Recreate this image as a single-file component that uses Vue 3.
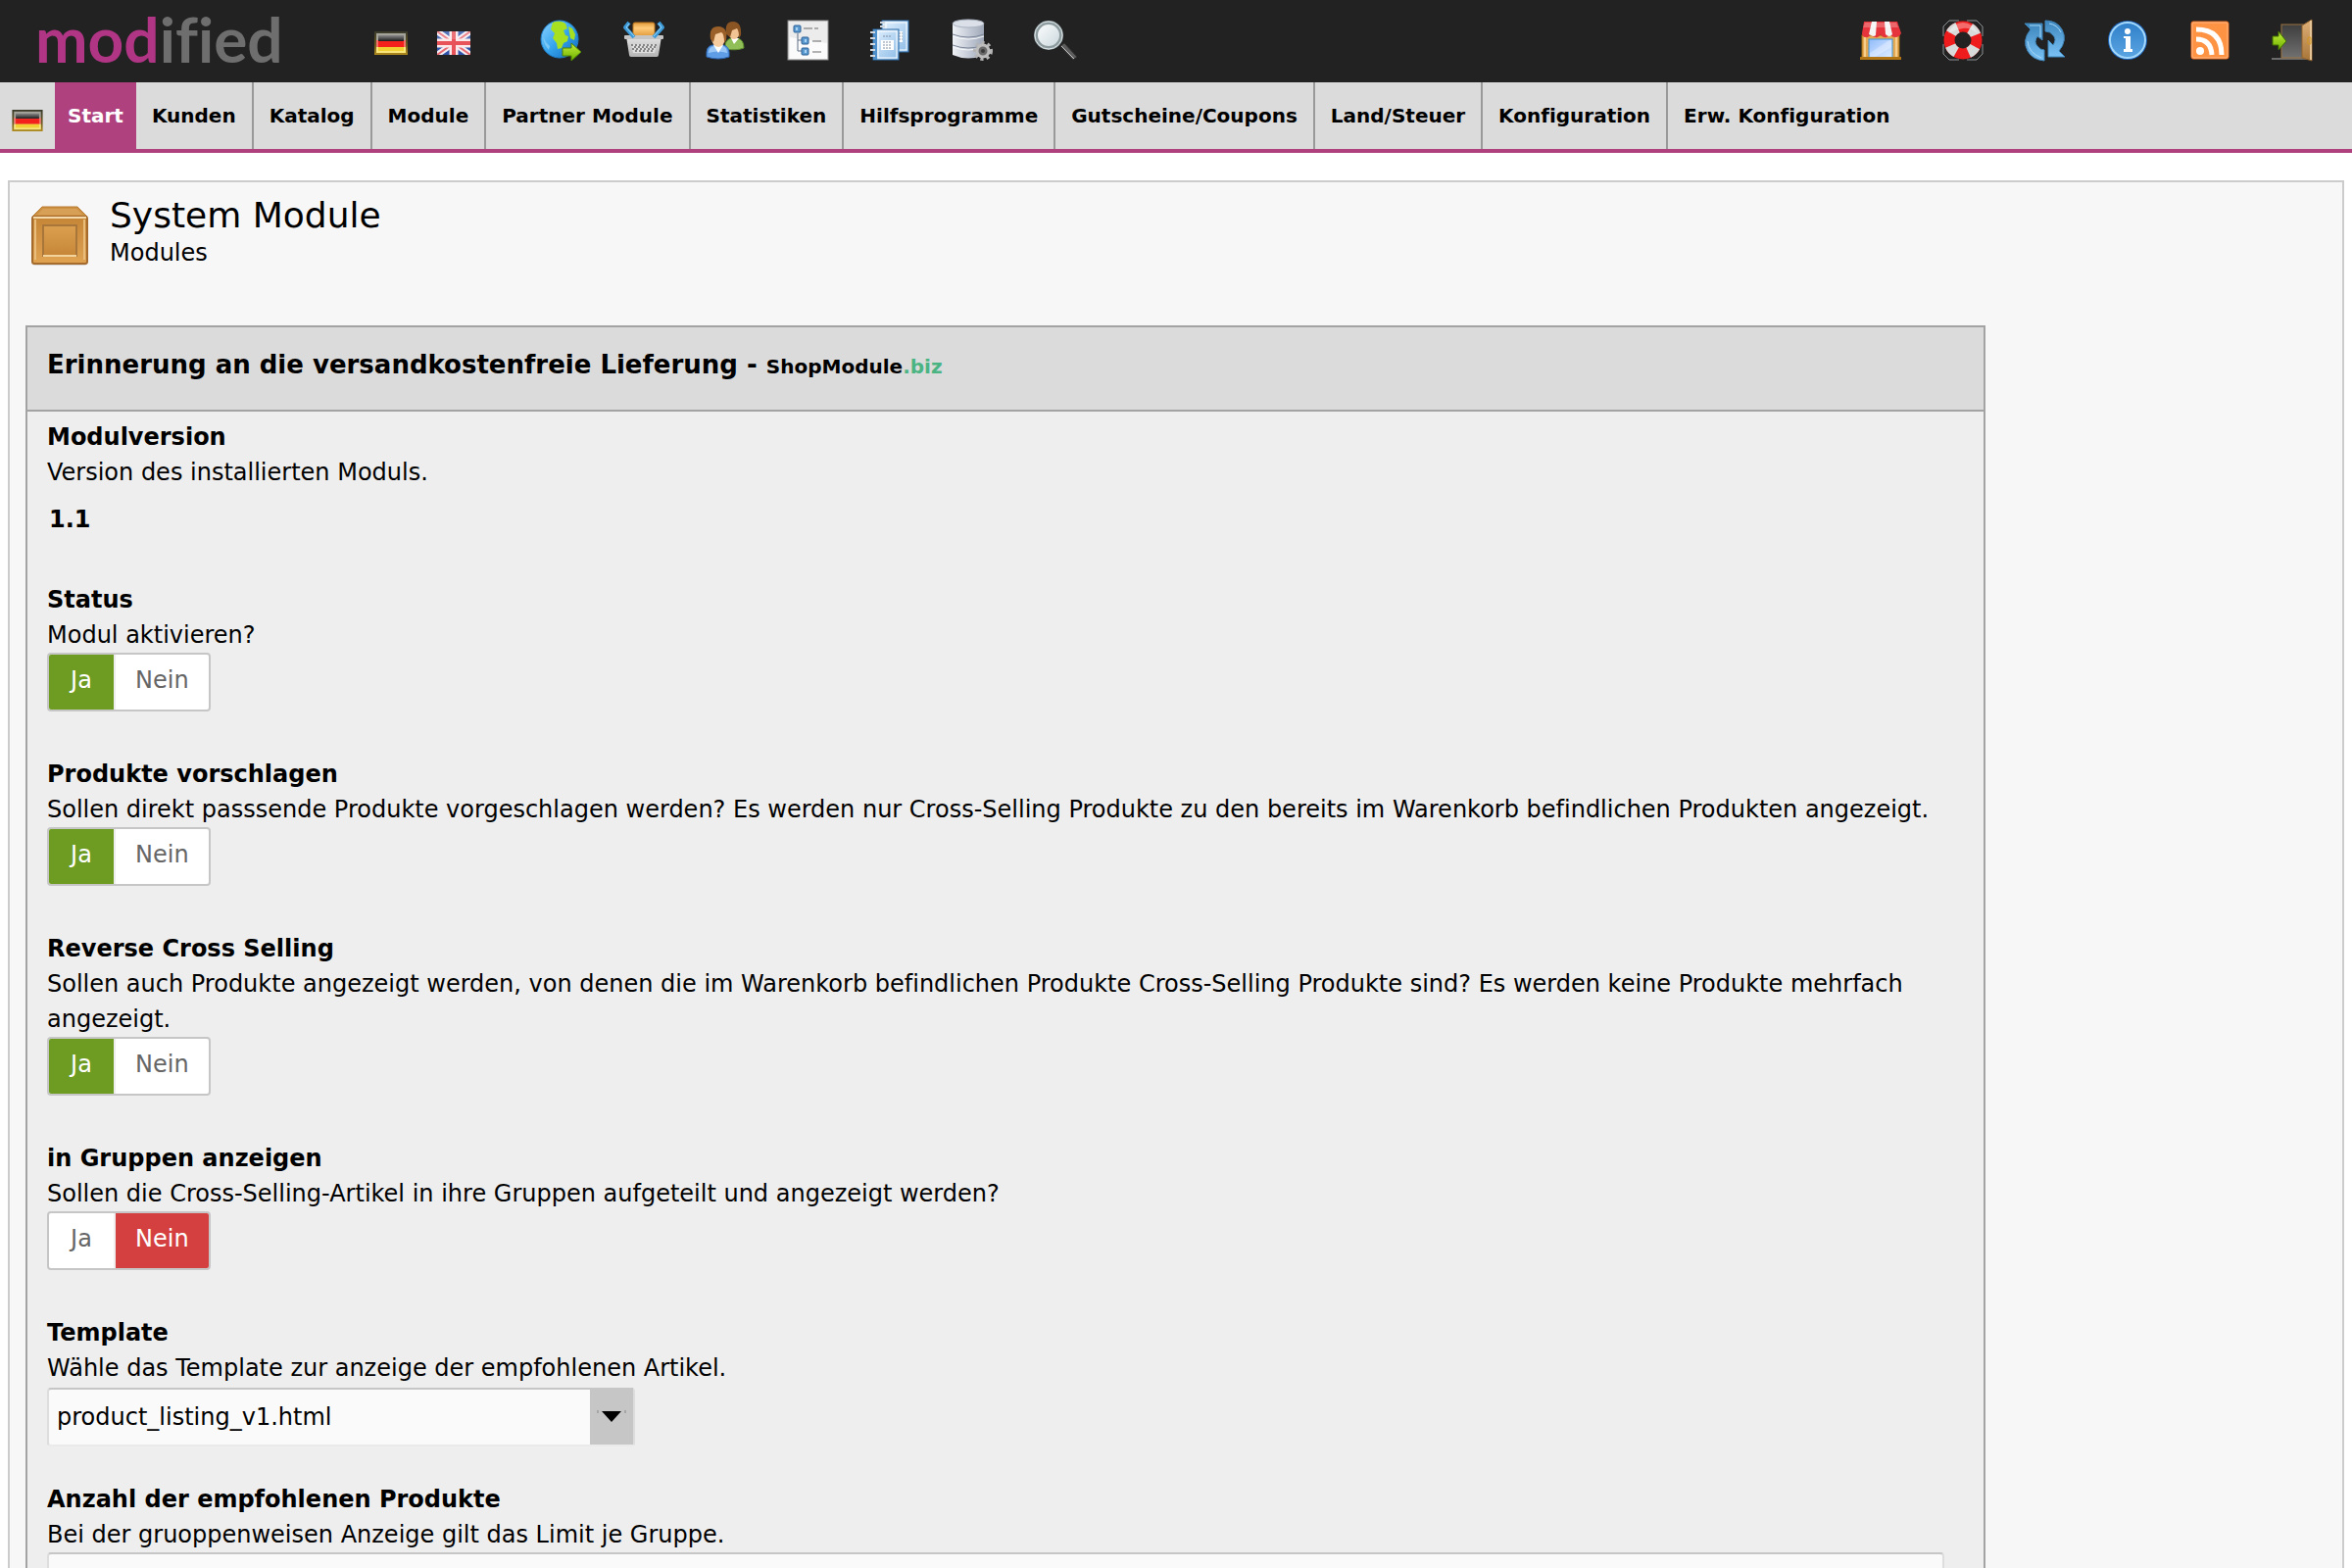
<script setup>
import { ref } from 'vue'

const navItems = [
  'Start',
  'Kunden',
  'Katalog',
  'Module',
  'Partner Module',
  'Statistiken',
  'Hilfsprogramme',
  'Gutscheine/Coupons',
  'Land/Steuer',
  'Konfiguration',
  'Erw. Konfiguration'
]
const activeItem = ref('Start')

const switches = ref([
  {
    key: 'status',
    title: 'Status',
    text: 'Modul aktivieren?',
    value: 'ja'
  },
  {
    key: 'products',
    title: 'Produkte vorschlagen',
    text: 'Sollen direkt passsende Produkte vorgeschlagen werden? Es werden nur Cross-Selling Produkte zu den bereits im Warenkorb befindlichen Produkten angezeigt.',
    value: 'ja'
  },
  {
    key: 'reverse',
    title: 'Reverse Cross Selling',
    text: 'Sollen auch Produkte angezeigt werden, von denen die im Warenkorb befindlichen Produkte Cross-Selling Produkte sind? Es werden keine Produkte mehrfach angezeigt.',
    value: 'ja'
  },
  {
    key: 'groups',
    title: 'in Gruppen anzeigen',
    text: 'Sollen die Cross-Selling-Artikel in ihre Gruppen aufgeteilt und angezeigt werden?',
    value: 'nein'
  }
])

const template = ref('product_listing_v1.html')
const limit = ref('')
</script>

<template>
  <div class="admin">
    <!-- Shared gradients and symbols -->
    <svg class="defs" aria-hidden="true">
      <defs>
        <linearGradient id="g-globe" x1="0" y1="0" x2="1" y2="1">
          <stop offset="0" stop-color="#8fd4ff" />
          <stop offset="0.5" stop-color="#36a5ee" />
          <stop offset="1" stop-color="#0f66b8" />
        </linearGradient>
        <linearGradient id="g-green" x1="0" y1="0" x2="0" y2="1">
          <stop offset="0" stop-color="#c4ee3a" />
          <stop offset="1" stop-color="#6cb000" />
        </linearGradient>
        <linearGradient id="g-orange" x1="0" y1="0" x2="0" y2="1">
          <stop offset="0" stop-color="#e09a3a" />
          <stop offset="0.4" stop-color="#ffcb7a" />
          <stop offset="1" stop-color="#e09a3a" />
        </linearGradient>
        <linearGradient id="g-silver" x1="0" y1="0" x2="0" y2="1">
          <stop offset="0" stop-color="#e4e4e4" />
          <stop offset="1" stop-color="#b4b4b4" />
        </linearGradient>
        <linearGradient id="g-disk" x1="0" y1="0" x2="1" y2="0">
          <stop offset="0" stop-color="#eef1f5" />
          <stop offset="0.5" stop-color="#c6ccd8" />
          <stop offset="1" stop-color="#9fa8b8" />
        </linearGradient>
        <linearGradient id="g-book" x1="0" y1="0" x2="1" y2="1">
          <stop offset="0" stop-color="#e4f2ff" />
          <stop offset="1" stop-color="#8cbbe6" />
        </linearGradient>
        <linearGradient id="g-blue" x1="0" y1="0" x2="0" y2="1">
          <stop offset="0" stop-color="#3d86bd" />
          <stop offset="1" stop-color="#7ac2f5" />
        </linearGradient>
        <linearGradient id="g-info" x1="0" y1="0" x2="0" y2="1">
          <stop offset="0" stop-color="#2f7fc9" />
          <stop offset="1" stop-color="#5ba5e2" />
        </linearGradient>
        <linearGradient id="g-glass" x1="0" y1="0" x2="1" y2="1">
          <stop offset="0" stop-color="#ffffff" />
          <stop offset="1" stop-color="#c8d6dc" />
        </linearGradient>
        <linearGradient id="g-window" x1="0" y1="0" x2="1" y2="1">
          <stop offset="0" stop-color="#8fbcf8" />
          <stop offset="0.5" stop-color="#bcd6ff" />
          <stop offset="1" stop-color="#dfeeff" />
        </linearGradient>
        <linearGradient id="g-wood" x1="0" y1="0" x2="0" y2="1">
          <stop offset="0" stop-color="#c58536" />
          <stop offset="1" stop-color="#dfa352" />
        </linearGradient>
        <linearGradient id="g-wood-in" x1="0" y1="0" x2="0" y2="1">
          <stop offset="0" stop-color="#dba04f" />
          <stop offset="1" stop-color="#c68638" />
        </linearGradient>
        <linearGradient id="g-door" x1="0" y1="0" x2="0" y2="1">
          <stop offset="0" stop-color="#3e3e3e" />
          <stop offset="1" stop-color="#707070" />
        </linearGradient>
        <linearGradient id="g-leaf" x1="0" y1="0" x2="0" y2="1">
          <stop offset="0" stop-color="#deb078" />
          <stop offset="1" stop-color="#a87538" />
        </linearGradient>
        <linearGradient id="g-flag-black" x1="0" y1="0" x2="0" y2="1">
          <stop offset="0" stop-color="#8a8a8a" />
          <stop offset="1" stop-color="#1c1c1c" />
        </linearGradient>
        <linearGradient id="g-flag-edge" x1="0" y1="0" x2="0" y2="1">
          <stop offset="0" stop-color="#3a3a2c" />
          <stop offset="0.6" stop-color="#6b5a20" />
          <stop offset="1" stop-color="#b08a1c" />
        </linearGradient>
        <symbol id="flag-de" viewBox="0 0 34 24">
          <rect width="34" height="24" fill="url(#g-flag-edge)" />
          <rect x="2" y="2" width="30" height="20" fill="#a3a39a" />
          <rect x="2" y="9" width="30" height="7" fill="#f47068" />
          <rect x="2" y="16" width="30" height="6" fill="#f8e57c" />
          <rect x="4" y="4" width="26" height="6" fill="url(#g-flag-black)" />
          <rect x="4" y="10" width="26" height="6" fill="#f3201c" />
          <rect x="4" y="16" width="26" height="4" fill="#f0d033" />
        </symbol>
        <symbol id="flag-gb" viewBox="0 0 34 24">
          <rect width="34" height="24" fill="#2f53a8" />
          <path d="M0 0L34 24M34 0L0 24" stroke="#f3eef4" stroke-width="6" />
          <path d="M0 0L34 24M34 0L0 24" stroke="#ea6a72" stroke-width="2" />
          <path d="M17 0V24M0 12H34" stroke="#fbe9ea" stroke-width="9" />
          <path d="M17 0V24M0 12H34" stroke="#e8535a" stroke-width="4" />
          <rect width="34" height="8" fill="#ffffff" opacity="0.18" />
        </symbol>
      </defs>
    </svg>

    <header class="topbar">
      <a href="#" class="logo"><span class="logo-mod">mod</span>ified</a>

      <div class="languages">
        <a href="#" aria-label="Deutsch"><svg class="flag"><use href="#flag-de" /></svg></a>
        <a href="#" aria-label="English"><svg class="flag"><use href="#flag-gb" /></svg></a>
      </div>

      <div class="tools">
        <!-- Globe -->
        <a href="#" aria-label="Shop">
          <svg viewBox="0 0 42 42" class="icon">
            <circle cx="19" cy="20" r="19" fill="url(#g-globe)" stroke="#1f7fcb" />
            <path d="M12 3q7-3 13 1l2 5-4 2 2 5 3 1-1 5-4 2-2 5-4 1-1-6-4-5 2-5-4-4zM28 7l4 2 3 6-1 6-4-2-1-6z" fill="#a6e021" />
            <path d="M2 17l3 6 4 4-1 4Q3 26 2 17z" fill="#7cc8f5" />
            <path d="M22 29h9v-5l10 9-10 9v-5h-9z" fill="url(#g-green)" stroke="#4c8200" />
          </svg>
        </a>
        <!-- Basket -->
        <a href="#" aria-label="Bestellungen">
          <svg viewBox="0 0 42 42" class="icon">
            <rect x="10" y="3" width="22" height="14" rx="2" fill="url(#g-orange)" stroke="#b9741c" />
            <path d="M3 17h36l-3 19q0 2-2 2H8q-2 0-2-2z" fill="url(#g-silver)" />
            <rect x="1" y="16" width="40" height="4" rx="1" fill="#c4c4c4" />
            <path d="M8 25h26l-2 9H10z" fill="#dedede" />
            <path d="M8 26h26M9 30h24" stroke="#858585" stroke-width="2" stroke-dasharray="2 2" />
            <path d="M9 28h24M10 32h22" stroke="#858585" stroke-width="2" stroke-dasharray="2 2" stroke-dashoffset="2" />
            <path d="M6 3L2 8l9 10M36 3l4 5-9 10" fill="none" stroke="#3c9ad8" stroke-width="4" stroke-linejoin="round" />
            <path d="M6 4L3 8l8 9M36 4l3 4-8 9" fill="none" stroke="#9bd5f8" />
          </svg>
        </a>
        <!-- Customers -->
        <a href="#" aria-label="Kunden">
          <svg viewBox="0 0 42 42" class="icon">
            <path d="M20 30q-1-9 6-11h6q7 1 7 10-7 3-19 1z" fill="#8fbf56" stroke="#5f8f30" />
            <path d="M26 19l3 6 5-6z" fill="#ffffff" />
            <ellipse cx="29" cy="12" rx="6" ry="8" fill="#f3c493" />
            <path d="M21 15Q19 2 28 2t8 14l-2 3q0-8-2-10l-5 2-2 7z" fill="#8b5423" />
            <path d="M1 38q-1-11 6-12h11q7 1 6 12-11 4-23 0z" fill="#5f9ee6" stroke="#2d66b5" />
            <path d="M3 34q0-6 6-7h8q5 1 5 7-9-3-19 0z" fill="#9ac6f6" />
            <path d="M8 26l5 8 5-8z" fill="#ffffff" />
            <ellipse cx="13" cy="19" rx="7" ry="9" fill="#f7cd9f" />
            <path d="M5 20Q3 7 13 7t8 14l-2 3q0-10-3-11l-6 2-2 8z" fill="#9b6029" />
          </svg>
        </a>
        <!-- Tree -->
        <a href="#" aria-label="Kategorien">
          <svg viewBox="0 0 42 42" class="icon">
            <rect x="0" y="1" width="41" height="40" fill="#ececec" stroke="#8c8c8c" />
            <path d="M2 18l38 6v16H2z" fill="#ffffff" opacity="0.8" />
            <path d="M10 14v18h6M10 21h6" fill="none" stroke="#5d6f83" />
            <g fill="#5c9bd0" stroke="#2b5f94">
              <rect x="6" y="6" width="7" height="7" rx="1" />
              <rect x="14" y="18" width="7" height="7" rx="1" />
              <rect x="14" y="29" width="7" height="7" rx="1" />
            </g>
            <path d="M9 8v3M18 20v3M18 31v3" stroke="#a9d3f5" stroke-width="2" />
            <path d="M16 9h9M27 9h4M25 22h9M25 33h9" stroke="#6b6b6b" stroke-width="1" />
          </svg>
        </a>
        <!-- Notebooks -->
        <a href="#" aria-label="Content">
          <svg viewBox="0 0 42 42" class="icon">
            <rect x="12" y="1" width="27" height="32" fill="url(#g-book)" stroke="#2f6ca8" />
            <rect x="16" y="3" width="21" height="28" fill="none" stroke="#ffffff" />
            <rect x="28" y="12" width="5" height="11" fill="#ffffff" />
            <path d="M29 14h4M29 17h4M29 20h4" stroke="#8a9bb0" stroke-dasharray="2 1" />
            <rect x="3" y="10" width="26" height="31" fill="url(#g-book)" stroke="#2f6ca8" />
            <rect x="3" y="10" width="4" height="31" fill="#4d8fca" />
            <rect x="8" y="12" width="19" height="27" fill="none" stroke="#ffffff" />
            <rect x="11" y="21" width="13" height="10" fill="#ffffff" />
            <path d="M13 23h9M13 26h9M13 29h9M13 17h9" stroke="#7f8fa3" stroke-dasharray="2 1" />
            <path d="M0 13h5M0 19h5M0 25h5M0 31h5M0 37h5" stroke="#d2d8de" stroke-width="2" />
            <path d="M10 3h5M10 7h5" stroke="#d2d8de" stroke-width="2" />
          </svg>
        </a>
        <!-- Database -->
        <a href="#" aria-label="Datenbank">
          <svg viewBox="0 0 42 42" class="icon">
            <path d="M0 4v32q16 7 32 0V4z" fill="url(#g-disk)" />
            <ellipse cx="16" cy="4" rx="16" ry="4" fill="#dbe0e8" stroke="#aab2c0" />
            <path d="M0 15q16 6 32 0M0 26q16 6 32 0" fill="none" stroke="#7d8798" />
            <path d="M0 17q16 6 32 0M0 28q16 6 32 0" fill="none" stroke="#f5f7fa" />
            <circle cx="31" cy="32" r="8" fill="none" stroke="#b4b4b4" stroke-width="4" stroke-dasharray="3 3" />
            <circle cx="31" cy="32" r="6" fill="#6a6a6a" stroke="#bdbdbd" stroke-width="3" />
            <circle cx="31" cy="32" r="2" fill="#3a3a3a" />
          </svg>
        </a>
        <!-- Search -->
        <a href="#" aria-label="Suche">
          <svg viewBox="0 0 42 42" class="icon">
            <path d="M26 27l4-3 13 14-4 3z" fill="#5d5d5d" stroke="#2f2f2f" />
            <path d="M27 27l13 13" stroke="#c4c4c4" stroke-width="1" />
            <circle cx="14" cy="16" r="13" fill="url(#g-glass)" stroke="#8d9b9f" stroke-width="4" />
            <circle cx="14" cy="16" r="14" fill="none" stroke="#dfe8ea" stroke-width="1" />
          </svg>
        </a>
      </div>

      <div class="tools tools-right">
        <!-- Storefront -->
        <a href="#" aria-label="Shop ansehen">
          <svg viewBox="0 0 42 42" class="icon">
            <rect x="2" y="16" width="38" height="23" fill="#e3a851" stroke="#9d6a14" />
            <path d="M5 18v20M37 18v20" stroke="#f6cf8c" stroke-width="2" />
            <rect x="9" y="20" width="24" height="20" fill="url(#g-window)" stroke="#3f97d8" stroke-width="1" />
            <path d="M10 34L30 21h2v7L14 39h-4z" fill="#ffffff" opacity="0.3" />
            <rect y="38" width="42" height="3" fill="#b17516" />
            <path d="M4 2h34l4 12q-2 4-6 4t-5-3q-3 4-6 3-3 0-4-3-2 4-5 3-4 0-5-3-2 4-5 3-4 0-4-4z" fill="#e5343b" />
            <path d="M12 2h5l-1 14q-2 2-5 0l-2-1zM25 2h5l3 13q-3 4-7 0z" fill="#f4f4f4" />
            <path d="M5 3h32l2 5H3z" fill="#ffffff" opacity="0.25" />
          </svg>
        </a>
        <!-- Life buoy -->
        <a href="#" aria-label="Hilfe">
          <svg viewBox="0 0 42 42" class="icon">
            <path d="M17 1H7L1 7v10M25 1h10l6 6v10M1 25v10l6 6h10M41 25v10l-6 6H25" fill="none" stroke="#8d9294" />
            <circle cx="21" cy="21" r="14" fill="none" stroke="#ee1c1c" stroke-width="11" />
            <circle cx="21" cy="21" r="14" fill="none" stroke="#d9dbdb" stroke-width="11" stroke-dasharray="9 13" stroke-dashoffset="-7" />
            <path d="M6 14Q11 3 21 3t15 11Q28 8 21 9T6 14z" fill="#ffffff" opacity="0.35" />
          </svg>
        </a>
        <!-- Refresh -->
        <a href="#" aria-label="Cache leeren">
          <svg viewBox="0 0 42 42" class="icon">
            <g fill="url(#g-blue)" stroke="#3f86bb">
              <path d="M0 4h18v17l-5-4q-4 6 0 10 3 4 7 4v11Q8 41 3 32-3 21 6 10z" />
              <path d="M41 38H24V21l5 5q4-6 0-10-3-4-8-4V1q12 0 17 9 6 11-3 22z" />
            </g>
            <path d="M5 6h11v12M3 22q1 12 14 17M25 4q8 1 12 9" fill="none" stroke="#a4d6f7" />
          </svg>
        </a>
        <!-- Info -->
        <a href="#" aria-label="Informationen">
          <svg viewBox="0 0 42 42" class="icon">
            <circle cx="21" cy="21" r="20" fill="#1b62b8" />
            <circle cx="21" cy="21" r="18" fill="url(#g-info)" stroke="#a3d8fb" stroke-width="2" />
            <circle cx="21" cy="12" r="3" fill="#ffffff" />
            <path d="M17 17h7v13h2v3h-9v-3h2V19h-2z" fill="#ffffff" />
          </svg>
        </a>
        <!-- Feed -->
        <a href="#" aria-label="RSS">
          <svg viewBox="0 0 42 42" class="icon">
            <rect x="2" y="2" width="38" height="38" rx="2" fill="#ff9344" stroke="#e06a20" />
            <rect x="3" y="3" width="36" height="36" rx="1" fill="none" stroke="#ffb680" />
            <circle cx="11" cy="32" r="4" fill="#ffffff" />
            <path d="M7 20q15 0 16 16M7 10q26 0 26 26" fill="none" stroke="#ffffff" stroke-width="5" />
          </svg>
        </a>
        <!-- Logout -->
        <a href="#" aria-label="Abmelden">
          <svg viewBox="0 0 42 42" class="icon">
            <path d="M0 40h36" stroke="#6b6b6b" stroke-width="2" />
            <rect x="10" y="5" width="22" height="34" fill="url(#g-door)" stroke="#9c7440" />
            <path d="M31 6l10-6v42l-10-3z" fill="url(#g-leaf)" stroke="#8f6330" />
            <path d="M40 1v40" stroke="#e5c596" stroke-width="2" />
            <rect x="37" y="18" width="3" height="7" rx="1" fill="none" stroke="#d9981c" />
            <path d="M1 17h6v-5l8 10-8 9v-5H1z" fill="url(#g-green)" stroke="#3f6d00" />
          </svg>
        </a>
      </div>
    </header>

    <nav class="mainnav">
      <a href="#" class="nav-flag" aria-label="Deutsch"><svg><use href="#flag-de" /></svg></a>
      <a
        v-for="item in navItems"
        :key="item"
        href="#"
        class="nav-item"
        :class="{ active: item === activeItem }"
        @click.prevent="activeItem = item"
      >{{ item }}</a>
    </nav>

    <main class="content">
      <div class="page-head">
        <svg viewBox="0 0 58 62" class="head-icon">
          <rect x="1" y="50" width="56" height="11" rx="3" fill="#000000" opacity="0.12" />
          <path d="M11 1h36l10 10H1z" fill="#cd9143" stroke="#b87a30" />
          <path d="M12 3h34l6 6H6z" fill="#d8a057" />
          <rect x="1" y="11" width="56" height="48" rx="2" fill="url(#g-wood)" stroke="#a56b2c" stroke-width="2" />
          <path d="M2 12h54" stroke="#f5d9a8" stroke-width="2" />
          <path d="M4 14v41M54 14v41" stroke="#e9bd7c" stroke-width="2" />
          <rect x="12" y="20" width="34" height="31" fill="url(#g-wood-in)" stroke="#a8763a" stroke-width="2" />
          <path d="M12 51h34" stroke="#f3d49c" stroke-width="2" />
        </svg>
        <div>
          <h1>System Module</h1>
          <p>Modules</p>
        </div>
      </div>

      <section class="module">
        <h2 class="module-title">
          Erinnerung an die versandkostenfreie Lieferung -
          <small>ShopModule<span class="tld">.biz</span></small>
        </h2>

        <form class="module-body" @submit.prevent>
          <div class="setting">
            <h3>Modulversion</h3>
            <p>Version des installierten Moduls.</p>
            <strong class="version">1.1</strong>
          </div>

          <div v-for="s in switches" :key="s.key" class="setting" role="radiogroup" :aria-labelledby="s.key">
            <h3 :id="s.key">{{ s.title }}</h3>
            <p>{{ s.text }}</p>
            <div class="toggle">
              <label class="yes">
                <input v-model="s.value" type="radio" :name="s.key" value="ja" />
                <span>Ja</span>
              </label>
              <label class="no">
                <input v-model="s.value" type="radio" :name="s.key" value="nein" />
                <span>Nein</span>
              </label>
            </div>
          </div>

          <div class="setting setting-select">
            <h3><label for="template">Template</label></h3>
            <p>Wähle das Template zur anzeige der empfohlenen Artikel.</p>
            <div class="select">
              <select id="template" v-model="template">
                <option>product_listing_v1.html</option>
              </select>
              <span class="select-arrow">
                <svg viewBox="0 0 30 12">
                  <path d="M5 1h20L15 12z" />
                  <path d="M1 0v3M29 0v3" stroke="#888" />
                </svg>
              </span>
            </div>
          </div>

          <div class="setting">
            <h3><label for="limit">Anzahl der empfohlenen Produkte</label></h3>
            <p>Bei der gruoppenweisen Anzeige gilt das Limit je Gruppe.</p>
            <input id="limit" v-model="limit" type="text" class="text-input" />
          </div>
        </form>
      </section>
    </main>
  </div>
</template>

<style>
body {
  margin: 0;
  background: #fff;
}
</style>

<style scoped>
.admin {
  font-family: Verdana, "DejaVu Sans", sans-serif;
  font-size: 24px;
  line-height: 36px;
  font-variant-ligatures: none;
  color: #000;
}

.admin * {
  box-sizing: border-box;
}

.defs {
  display: block;
  width: 0;
  height: 0;
}

h1, h2, h3, p {
  margin: 0;
}

a {
  color: inherit;
  text-decoration: none;
}

/* Top bar */
.topbar {
  display: flex;
  align-items: center;
  height: 84px;
  padding: 0 40px 0 36px;
  background: #222;
}

.logo {
  width: 258px;
  padding-bottom: 4px;
  font-family: Lato, sans-serif;
  font-size: 64px;
  font-weight: bold;
  line-height: 80px;
  color: #6e6e6e;
}

.logo-mod {
  color: #b03584;
}

.languages {
  display: flex;
  gap: 30px;
  margin: 4px 72px 0 88px;
}

.languages a,
.tools a {
  display: block;
}

.flag {
  display: block;
  width: 34px;
  height: 24px;
}

.tools {
  display: flex;
  gap: 42px;
  margin-bottom: 2px;
}

.tools-right {
  margin-left: auto;
}

.icon {
  display: block;
  width: 42px;
  height: 42px;
  overflow: visible;
}

/* Main navigation */
.mainnav {
  display: flex;
  background: #dbdbdb;
  border-bottom: 4px solid #af417e;
}

.nav-flag {
  padding: 28px 12px 0;
}

.nav-flag svg {
  display: block;
  width: 32px;
  height: 22px;
}

.nav-item {
  padding: 16px;
  font-size: 20px;
  font-weight: bold;
  border-right: 2px solid #999;
  white-space: nowrap;
}

.nav-item:last-child {
  border-right: 0;
}

.nav-item.active {
  padding: 16px 13px;
  color: #fff;
  background: #af417e;
  border-right: 0;
}

/* Page */
.content {
  margin: 28px 8px 0;
  padding: 14px 16px 40px;
  background: #f7f7f7;
  border: 2px solid #ccc;
}

.page-head {
  display: flex;
  gap: 22px;
  padding: 0 6px;
  margin-bottom: 56px;
}

.head-icon {
  width: 58px;
  height: 62px;
  margin-top: 10px;
}

h1 {
  font-size: 36px;
  line-height: 40px;
  font-weight: normal;
}

.module {
  max-width: 2000px;
  background: #eee;
  border: 2px solid #a3a3a3;
}

.module-title {
  padding: 20px 20px 28px;
  font-size: 26px;
  line-height: 36px;
  background: #dbdbdb;
  border-bottom: 2px solid #a3a3a3;
}

.module-title small {
  font-size: 20px;
  line-height: 20px;
}

.tld {
  color: #4bb483;
}

.module-body {
  padding: 8px 40px 20px 20px;
}

.setting {
  margin-bottom: 46px;
}

.setting h3 {
  font-size: 24px;
  line-height: 36px;
}

.version {
  display: block;
  padding: 12px 2px 0;
}

/* Yes/no switch */
.toggle {
  display: flex;
  width: fit-content;
  height: 60px;
  background: #fff;
  border: 2px solid #c6c6c6;
  border-radius: 4px;
  overflow: hidden;
}

.toggle label {
  position: relative;
  display: flex;
}

.toggle input {
  position: absolute;
  margin: 0;
  opacity: 0;
}

.toggle span {
  min-width: 66px;
  padding: 8px 20px 12px;
  color: #666;
  text-align: center;
}

.toggle .yes {
  border-right: 2px solid #eee;
}

.toggle input:checked + span {
  color: #fff;
}

.toggle .yes input:checked + span {
  background: #6e9c23;
}

.toggle .no input:checked + span {
  background: #d43f3f;
}

/* Fields */
.setting-select {
  margin-bottom: 36px;
}

.select {
  position: relative;
  width: 600px;
  max-width: 100%;
  margin-top: 2px;
}

.select select,
.text-input {
  display: block;
  width: 100%;
  height: 60px;
  padding: 0 8px;
  font: inherit;
  color: #000;
  background: #fafafa;
  border: 2px solid #ddd;
  border-top-color: #c6c6c6;
  border-bottom-color: #eaeaea;
  border-radius: 4px;
  appearance: none;
}

.select-arrow {
  position: absolute;
  top: 0;
  right: 2px;
  bottom: 2px;
  display: flex;
  align-items: center;
  justify-content: center;
  width: 44px;
  background: #c6c6c6;
  pointer-events: none;
}

.select-arrow svg {
  width: 30px;
  height: 12px;
}
</style>
